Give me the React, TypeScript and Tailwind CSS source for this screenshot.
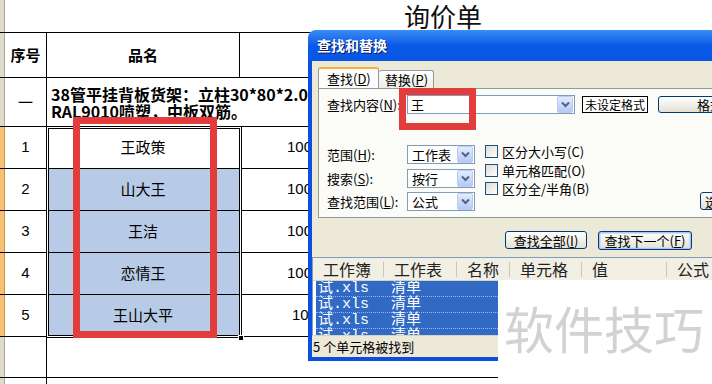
import React from 'react';

const CJK = "font-['Noto_Sans_CJK_SC','Liberation_Sans',sans-serif]";
const MONO = "font-['Liberation_Mono','Noto_Sans_CJK_SC',monospace]";
const BTN =
  'flex shrink-0 items-center justify-center whitespace-nowrap rounded-[3px] border border-[#003c74] bg-linear-to-b from-white to-[#e4e1d3] text-[13px] leading-none text-black';

const ROWS = [
  { no: '1', name: '王政策', qty: '1000', sel: false, pad: 'pl-[47px]' },
  { no: '2', name: '山大王', qty: '1000', sel: true, pad: 'pl-[47px]' },
  { no: '3', name: '王洁', qty: '1000', sel: true, pad: 'pl-[47px]' },
  { no: '4', name: '恋情王', qty: '1000', sel: true, pad: 'pl-[47px]' },
  { no: '5', name: '王山大平', qty: '100', sel: true, pad: 'pl-[52px]' },
];

const COLS = [
  { t: '工作簿', w: 'w-[70px]' },
  { t: '工作表', w: 'w-[72px]' },
  { t: '名称', w: 'w-[52px]' },
  { t: '单元格', w: 'w-[71px]' },
  { t: '值', w: 'w-[84px]' },
  { t: '公式', w: 'w-[80px]' },
];

function Drop() {
  return (
    <span className="flex h-[17px] w-[16px] shrink-0 items-center justify-center rounded-[2px] border border-[#b9cbf3] bg-linear-to-b from-[#e3ebfd] to-[#b4c9f5]">
      <svg width="9" height="7" viewBox="0 0 9 7">
        <path d="M1 1.5 L4.5 5 L8 1.5" fill="none" stroke="#4d6185" strokeWidth="2" />
      </svg>
    </span>
  );
}

function Select({ value }: { value: string }) {
  return (
    <div className="flex h-[19px] w-[68px] shrink-0 items-center justify-between border border-[#7f9db9] bg-white pl-[4px] pr-px text-[13px] leading-none">
      <span>{value}</span>
      <Drop />
    </div>
  );
}

function Check({ label }: { label: string }) {
  return (
    <div className="flex h-[13px] items-center gap-[4px] whitespace-nowrap text-[13px] leading-none">
      <span className="h-[13px] w-[13px] shrink-0 border border-[#1c5180] bg-linear-to-br from-[#dcdcd7] to-white" />
      <span>{label}</span>
    </div>
  );
}

function Sheet() {
  return (
    <div className={`flex flex-col ${CJK} text-black`}>
      <div className="flex h-[33px] border-b border-black">
        <div className="w-[5px] border-r border-[#a9a79a] bg-[#dedbcc]" />
        <div className="pl-[399px] pt-px text-[26px] leading-[30px] text-[#111]">询价单</div>
      </div>
      <div className="flex h-[45px] border-b border-black">
        <div className="w-[5px] border-r border-[#a9a79a] bg-[#dedbcc]" />
        <div className="flex w-[42px] items-center justify-center border-r border-black text-[15px] font-bold">序号</div>
        <div className="flex w-[193px] items-center justify-center border-r border-black text-[15px] font-bold">品名</div>
        <div className="flex-1" />
      </div>
      <div className="flex h-[49px] border-b border-black">
        <div className="w-[5px] border-r border-[#a9a79a] bg-[#dedbcc]" />
        <div className="flex w-[42px] items-center justify-center border-r border-black text-[15px]">一</div>
        <div className="flex flex-1 flex-col justify-center whitespace-nowrap pl-[4px] pt-[2px] text-[16px] font-bold leading-[17px]">
          <span>38管平挂背板货架：立柱30*80*2.0</span>
          <span>RAL9010喷塑，中板双筋。</span>
        </div>
      </div>
      {ROWS.map((r) => (
        <div key={r.no} className="flex h-[42px] border-b border-black">
          <div className="w-[5px] border-r border-[#c9954a] bg-[#f6c173]" />
          <div className="flex w-[42px] items-center justify-center border-r border-black font-['Liberation_Sans',sans-serif] text-[15px]">
            {r.no}
          </div>
          <div
            className={`flex w-[193px] items-center justify-center border-r border-black text-[15px] ${
              r.sel ? 'bg-[#b7cbe6]' : 'bg-white'
            }`}
          >
            {r.name}
          </div>
          <div className={`flex flex-1 items-center font-['Liberation_Sans',sans-serif] text-[15px] ${r.pad}`}>{r.qty}</div>
        </div>
      ))}
      <div className="flex h-[41px] border-b border-black">
        <div className="w-[5px] border-r border-[#a9a79a] bg-[#dedbcc]" />
        <div className="w-[42px] border-r border-black" />
        <div className="flex-1" />
      </div>
      <div className="flex h-[10px]">
        <div className="w-[5px] border-r border-[#a9a79a] bg-[#dedbcc]" />
        <div className="w-[42px] border-r border-black" />
      </div>
    </div>
  );
}

function Dialog() {
  return (
    <div className={`absolute left-[308px] top-[30px] flex h-[331px] w-[420px] flex-col ${CJK} text-black`}>
      <div className="flex h-[31px] items-center rounded-tl-[8px] bg-linear-to-b from-[#3a8cf6] via-[#0a59e6] to-[#0756e6] pl-[9px]">
        <span className="text-[14px] font-bold text-white [text-shadow:1px_1px_#0a1866]">查找和替换</span>
      </div>
      <div className="flex flex-1 flex-col border-b-4 border-l-4 border-[#0b4fe0] bg-[#ece9d8]">
        {/* tabs */}
        <div className="ml-[6px] mt-[6px] flex h-[21px] items-end">
          <div className="flex h-[21px] w-[61px] items-center rounded-t-[3px] border border-b-0 border-[#919b9c] border-t-[#f2b13a] border-t-2 bg-[#fcfcfa] pl-[8px] text-[13px] leading-none">
            查找(<u>D</u>)
          </div>
          <div className="flex h-[18px] w-[55px] items-center rounded-t-[3px] border border-b-0 border-l-0 border-[#919b9c] bg-linear-to-b from-white to-[#ecebe5] pl-[6px] text-[13px] leading-none">
            替换(<u>P</u>)
          </div>
        </div>
        {/* panel */}
        <div className="ml-[6px] flex h-[130px] flex-col overflow-hidden border border-r-0 border-[#919b9c] bg-[#fbfbf8] pl-[8px]">
          <div className="mt-[6px] flex h-[19px] items-center text-[13px] leading-none">
            <span className="w-[80px] shrink-0 whitespace-nowrap">查找内容(<u>N</u>):</span>
            <div className="flex h-[19px] w-[168px] shrink-0 items-center justify-between border border-[#7f9db9] bg-white pl-[3px] pr-px">
              <span>王</span>
              <Drop />
            </div>
            <div className="ml-[7px] flex h-[17px] w-[66px] shrink-0 items-center justify-center whitespace-nowrap border border-black bg-white text-[12px]">
              未设定格式
            </div>
            <div className={`ml-[10px] h-[17px] w-[134px] ${BTN}`}>格式(<u>M</u>)...</div>
          </div>
          <div className="mt-[31px] flex">
            <div className="flex shrink-0 flex-col gap-[4.5px] text-[13px] leading-none">
              <div className="flex items-center">
                <span className="w-[80px] whitespace-nowrap">范围(<u>H</u>):</span>
                <Select value="工作表" />
              </div>
              <div className="flex items-center">
                <span className="w-[80px] whitespace-nowrap">搜索(<u>S</u>):</span>
                <Select value="按行" />
              </div>
              <div className="flex items-center">
                <span className="w-[80px] whitespace-nowrap">查找范围(<u>L</u>):</span>
                <Select value="公式" />
              </div>
            </div>
            <div className="ml-[10px] flex w-[215px] shrink-0 flex-col gap-[5.5px]">
              <Check label="区分大小写(C)" />
              <Check label="单元格匹配(O)" />
              <Check label="区分全/半角(B)" />
            </div>
            <div className={`mb-px h-[18px] w-[80px] self-end justify-start pl-[4px] ${BTN}`}>选项(T) &lt;&lt;</div>
          </div>
        </div>
        {/* buttons */}
        <div className="flex h-[39px] items-start gap-[11px] pl-[193px] pt-[13px]">
          <div className={`h-[18px] w-[82px] ${BTN}`}>查找全部(<u>I</u>)</div>
          <div className={`h-[19px] w-[94px] ${BTN} shadow-[inset_0_0_0_1px_#a9c5f5,inset_0_0_0_2px_#cfdff9]`}>
            查找下一个(<u>F</u>)
          </div>
        </div>
        {/* results list */}
        <div className="flex h-[78px] flex-col border-l border-t border-[#7f9db9] bg-white">
          <div className="flex h-[23px] shrink-0 items-center border-b border-[#d5d2c2] bg-[#f1efe4] text-[16px] leading-none text-[#222]">
            {COLS.map((c, i) => (
              <React.Fragment key={c.t}>
                <div className={`${c.w} shrink-0 pl-[10px]`}>{c.t}</div>
                {i < COLS.length - 1 && <span className="h-[15px] w-px shrink-0 bg-[#c8c6b8]" />}
              </React.Fragment>
            ))}
          </div>
          <div className={`flex min-h-0 flex-1 flex-col overflow-hidden pl-[3px] ${MONO} text-[15px] leading-[15px] text-white`}>
            {[0, 1, 2, 3].map((i) => (
              <div key={i} className="flex h-[16px] shrink-0 items-center border-b border-dotted border-[#9db4e6] bg-[#316ac5] pl-[2px]">
                <span className="w-[73px]">试.xls</span>
                <span>清单</span>
              </div>
            ))}
          </div>
        </div>
        <div className="flex h-[21px] items-center border-t border-[#d5d2c2] pl-px text-[13px] leading-none">
          5 个单元格被找到
        </div>
      </div>
    </div>
  );
}

export default function App() {
  return (
    <div className="relative h-[384px] w-[712px] overflow-hidden bg-white">
      <Sheet />
      {/* selection outline + fill handle */}
      <div className="absolute left-[46px] top-[126px] h-[212px] w-[196px] border border-black shadow-[inset_0_0_0_1px_white,inset_0_0_0_2px_black]" />
      <div className="absolute left-[238px] top-[335px] h-[6px] w-[6px] border border-white bg-black" />
      {/* annotation on the sheet */}
      <div className="absolute left-[73px] top-[117px] h-[221px] w-[144px] border-[7px] border-[#e33c3c]" />
      <Dialog />
      <div className="absolute left-[399px] top-[88px] h-[42px] w-[77px] border-[7px] border-[#e33c3c]" />
      {/* watermark */}
      <div className="absolute bottom-0 left-[498px] right-0 top-[280px] bg-white pl-[6px] pt-[22px]">
        <span className={`${CJK} text-[50px] leading-[50px] text-[#d2d2d2]`}>软件技巧</span>
      </div>
    </div>
  );
}
